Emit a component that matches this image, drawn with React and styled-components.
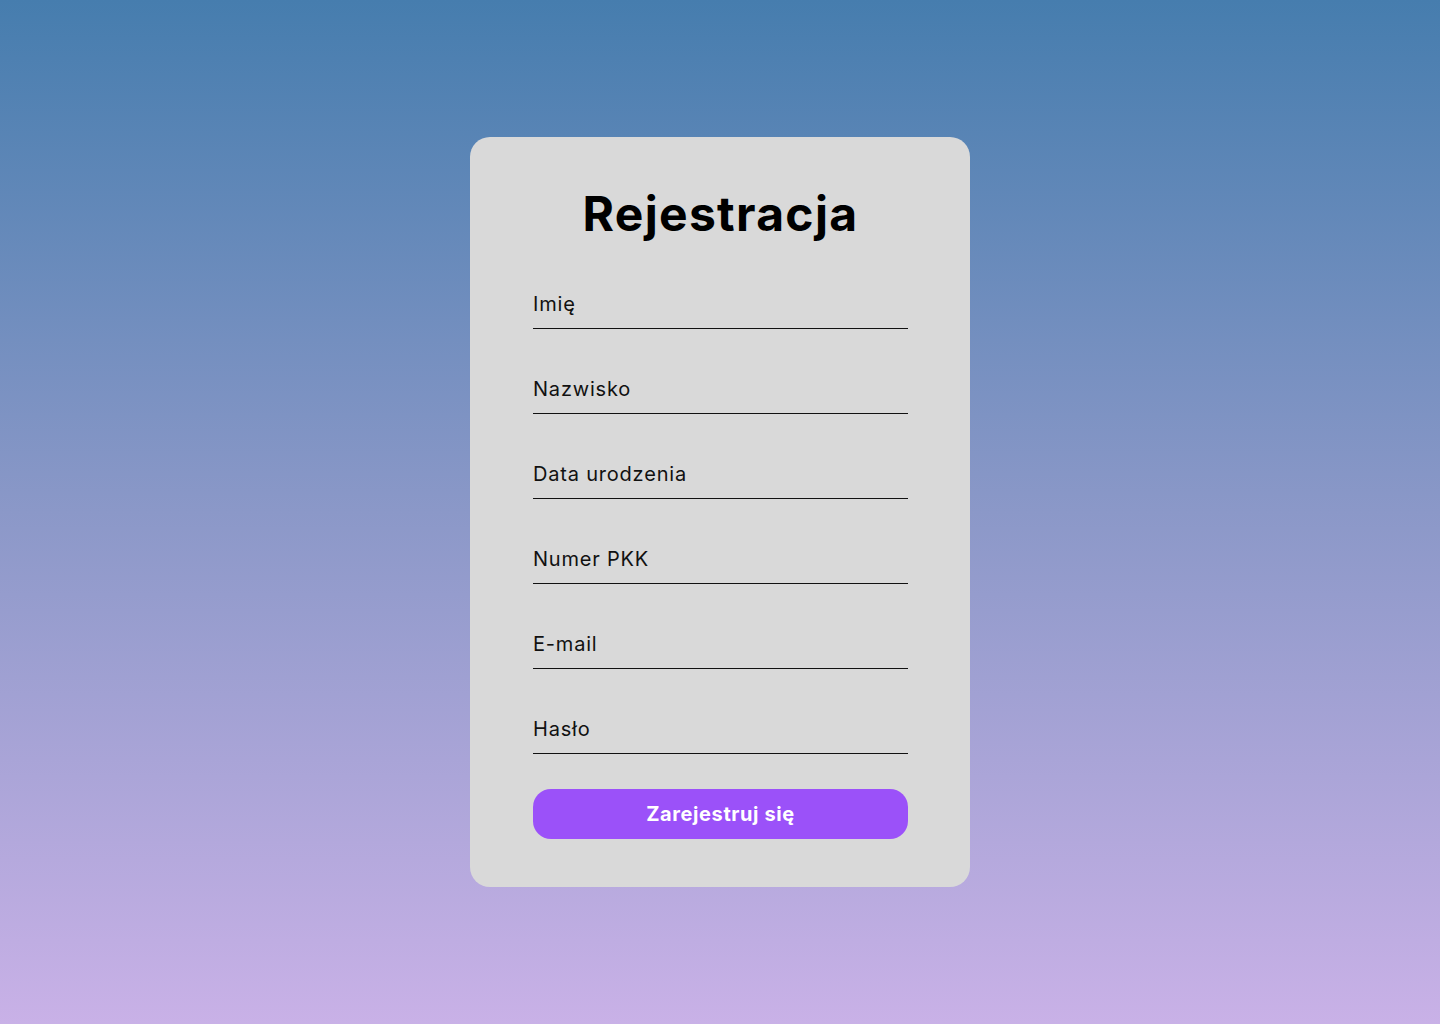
import React from "react";
import styled, { createGlobalStyle } from "styled-components";

const Global = createGlobalStyle`
  html, body { margin: 0; padding: 0; }
  body {
    font-family: "Inter", "Open Sans", sans-serif;
  }
  * { box-sizing: border-box; }
`;

const Page = styled.main`
  width: 100%;
  min-height: 1024px;
  background: linear-gradient(180deg, #467dae 0%, #8b98c8 50%, #c9b1e7 100%);
  display: flex;
  justify-content: center;
  align-items: flex-start;
  padding-top: 137px;
`;

const Card = styled.form`
  width: 500px;
  height: 750px;
  background: #d9d9d9;
  border-radius: 20px;
  padding: 48px 62px 48px 63px;
  display: flex;
  flex-direction: column;
  align-items: stretch;
`;

const Title = styled.h1`
  margin: 0 0 41px;
  font-family: "Inter", sans-serif;
  font-weight: 700;
  font-size: 48px;
  line-height: 58px;
  text-align: center;
  color: #000;
  letter-spacing: 1.3px;
`;

const Fields = styled.div`
  display: flex;
  flex-direction: column;
  gap: 40px;
`;

const Input = styled.input`
  width: 100%;
  height: 45px;
  border: none;
  border-bottom: 1px solid #111;
  background: transparent;
  padding: 0 0 4px;
  font-family: "Inter", sans-serif;
  font-size: 20px;
  letter-spacing: 0.8px;
  color: #111;
  outline: none;
  &::placeholder {
    color: #111;
    opacity: 1;
  }
`;

const Button = styled.button`
  margin-top: 35px;
  height: 50px;
  width: 100%;
  border: none;
  border-radius: 18px;
  background: #9b51f9;
  color: #fff;
  font-family: "Inter", sans-serif;
  font-weight: 700;
  font-size: 20px;
  letter-spacing: 0.6px;
  cursor: pointer;
`;

const fields = [
  { name: "imie", type: "text", label: "Imię" },
  { name: "nazwisko", type: "text", label: "Nazwisko" },
  { name: "data", type: "text", label: "Data urodzenia" },
  { name: "pkk", type: "text", label: "Numer PKK" },
  { name: "email", type: "email", label: "E-mail" },
  { name: "haslo", type: "password", label: "Hasło" },
];

export default function App() {
  return (
    <>
      <Global />
      <Page>
        <Card onSubmit={(e) => e.preventDefault()}>
          <Title>Rejestracja</Title>
          <Fields>
            {fields.map((f) => (
              <Input key={f.name} name={f.name} type={f.type} placeholder={f.label} />
            ))}
          </Fields>
          <Button type="submit">Zarejestruj się</Button>
        </Card>
      </Page>
    </>
  );
}
